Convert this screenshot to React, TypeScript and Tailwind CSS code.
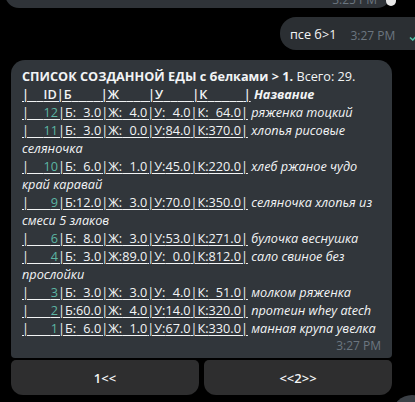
import { Fragment } from 'react';

const FS = '\u2007';

type Row = { id: number; b: string; j: string; u: string; k: string; name: string[] };

const ROWS: Row[] = [
  { id: 12, b: '3.0', j: '4.0', u: '4.0', k: '64.0', name: ['ряженка тоцкий'] },
  { id: 11, b: '3.0', j: '0.0', u: '84.0', k: '370.0', name: ['хлопья рисовые', 'селяночка'] },
  { id: 10, b: '6.0', j: '1.0', u: '45.0', k: '220.0', name: ['хлеб ржаное чудо', 'край каравай'] },
  { id: 9, b: '12.0', j: '3.0', u: '70.0', k: '350.0', name: ['селяночка хлопья из', 'смеси 5 злаков'] },
  { id: 6, b: '8.0', j: '3.0', u: '53.0', k: '271.0', name: ['булочка веснушка'] },
  { id: 4, b: '3.0', j: '89.0', u: '0.0', k: '812.0', name: ['сало свиное без', 'прослойки'] },
  { id: 3, b: '3.0', j: '3.0', u: '4.0', k: '51.0', name: ['молком ряженка'] },
  { id: 2, b: '60.0', j: '4.0', u: '14.0', k: '320.0', name: ['протеин whey atech'] },
  { id: 1, b: '6.0', j: '1.0', u: '67.0', k: '330.0', name: ['манная крупа увелка'] },
];

const pad = (s: string, n: number) => FS.repeat(Math.max(0, n - s.length)) + s;

function FoodRow({ r }: { r: Row }) {
  const idStr = pad(String(r.id), 4);
  const lead = idStr.replace(/[0-9]/g, '');
  return (
    <>
      <div className="whitespace-pre">
        <span className="underline decoration-1 underline-offset-2">
          |{lead}<span className="text-[#5cb5a3]">{r.id}</span>|Б:{pad(r.b, 4)}|Ж:{pad(r.j, 4)}|У:{pad(r.u, 4)}|К:{pad(r.k, 5)}|
        </span>{' '}
        <span className="italic">{r.name[0]}</span>
      </div>
      {r.name.slice(1).map((n) => (
        <div key={n} className="italic">{n}</div>
      ))}
    </>
  );
}

export default function App() {
  return (
    <div
      className="w-[415px] h-[402px] bg-black overflow-hidden relative text-[12.7px] leading-[18px] text-[#f2f4f5]"
      style={{ fontFamily: '"Open Sans", "Noto Sans", sans-serif' }}
    >
      {/* previous bubble, cut off at top */}
      <div className="absolute left-[5px] right-[24px] top-[-30px] h-[38px] rounded-b-[14px] bg-[#2f3338]">
        <span className="absolute right-[14px] bottom-[1px] text-[12px] leading-[14px] text-[#6c7680]">3:25 PM</span>
      </div>
      <div className="absolute left-[386px] top-[-6px] w-[10px] h-[12px] rounded-full bg-[#e8e8e8]" />

      <div className="flex flex-col pt-[17px]">
        {/* outgoing */}
        <div className="flex justify-end">
          <div className="flex items-end h-[33px] w-[150px] mr-[-15px] rounded-l-[16px] bg-[#2b2f33] pl-[10px] pb-[7px]">
            <span className="leading-[18px]">псе б&gt;1</span>
            <span className="ml-[14px] text-[12px] leading-[14px] text-[#6c7680]">3:27 PM</span>
            <svg width="10" height="8" viewBox="0 0 10 8" className="ml-[14px] mb-[2px]">
              <path d="M1 4.5 L3.8 7 L9 1.5" stroke="#4fbfa6" strokeWidth="1.6" fill="none" />
            </svg>
          </div>
        </div>

        {/* main bubble */}
        <div className="ml-[11px] mt-[10px] w-[381px] rounded-tl-[14px] rounded-tr-[14px] rounded-br-[4px] rounded-bl-[4px] bg-[#31363b] pl-[11px] pr-[10px] pt-[7px] pb-[3px]">
          <div className="whitespace-pre">
            <span className="font-bold">СПИСОК СОЗДАННОЙ ЕДЫ с белками &gt; 1.</span> Всего: 29.
          </div>
          <div className="whitespace-pre">
            <span className="underline decoration-1 underline-offset-2 font-semibold">
              |{FS}{FS}ID|Б{FS}{FS}{FS}{FS}|Ж{FS}{FS}{FS}{FS}|У{FS}{FS}{FS}{FS}|К{FS}{FS}{FS}{FS}{FS}|
            </span>{' '}
            <span className="font-bold italic">Название</span>
          </div>
          {ROWS.map((r) => (
            <Fragment key={r.id}>
              <FoodRow r={r} />
            </Fragment>
          ))}
          <div className="text-right text-[12px] leading-[18px] text-[#6c7680] pr-[1px]">3:27 PM</div>
        </div>

        {/* keyboard */}
        <div className="ml-[11px] mt-[2px] w-[381px] flex gap-[5px]">
          <button className="flex-1 h-[35px] rounded-t-[5px] rounded-b-[12px] bg-[#2e2e2f] text-[13px] font-semibold text-[#f2f4f5]">
            1&lt;&lt;
          </button>
          <button className="flex-1 h-[35px] rounded-t-[5px] rounded-b-[12px] bg-[#2e2e2f] text-[13px] font-semibold text-[#f2f4f5]">
            &lt;&lt;2&gt;&gt;
          </button>
        </div>
      </div>

      <div className="absolute left-[392px] top-[395px] w-[40px] h-[40px] rounded-full bg-[#3b4046]" />
    </div>
  );
}
